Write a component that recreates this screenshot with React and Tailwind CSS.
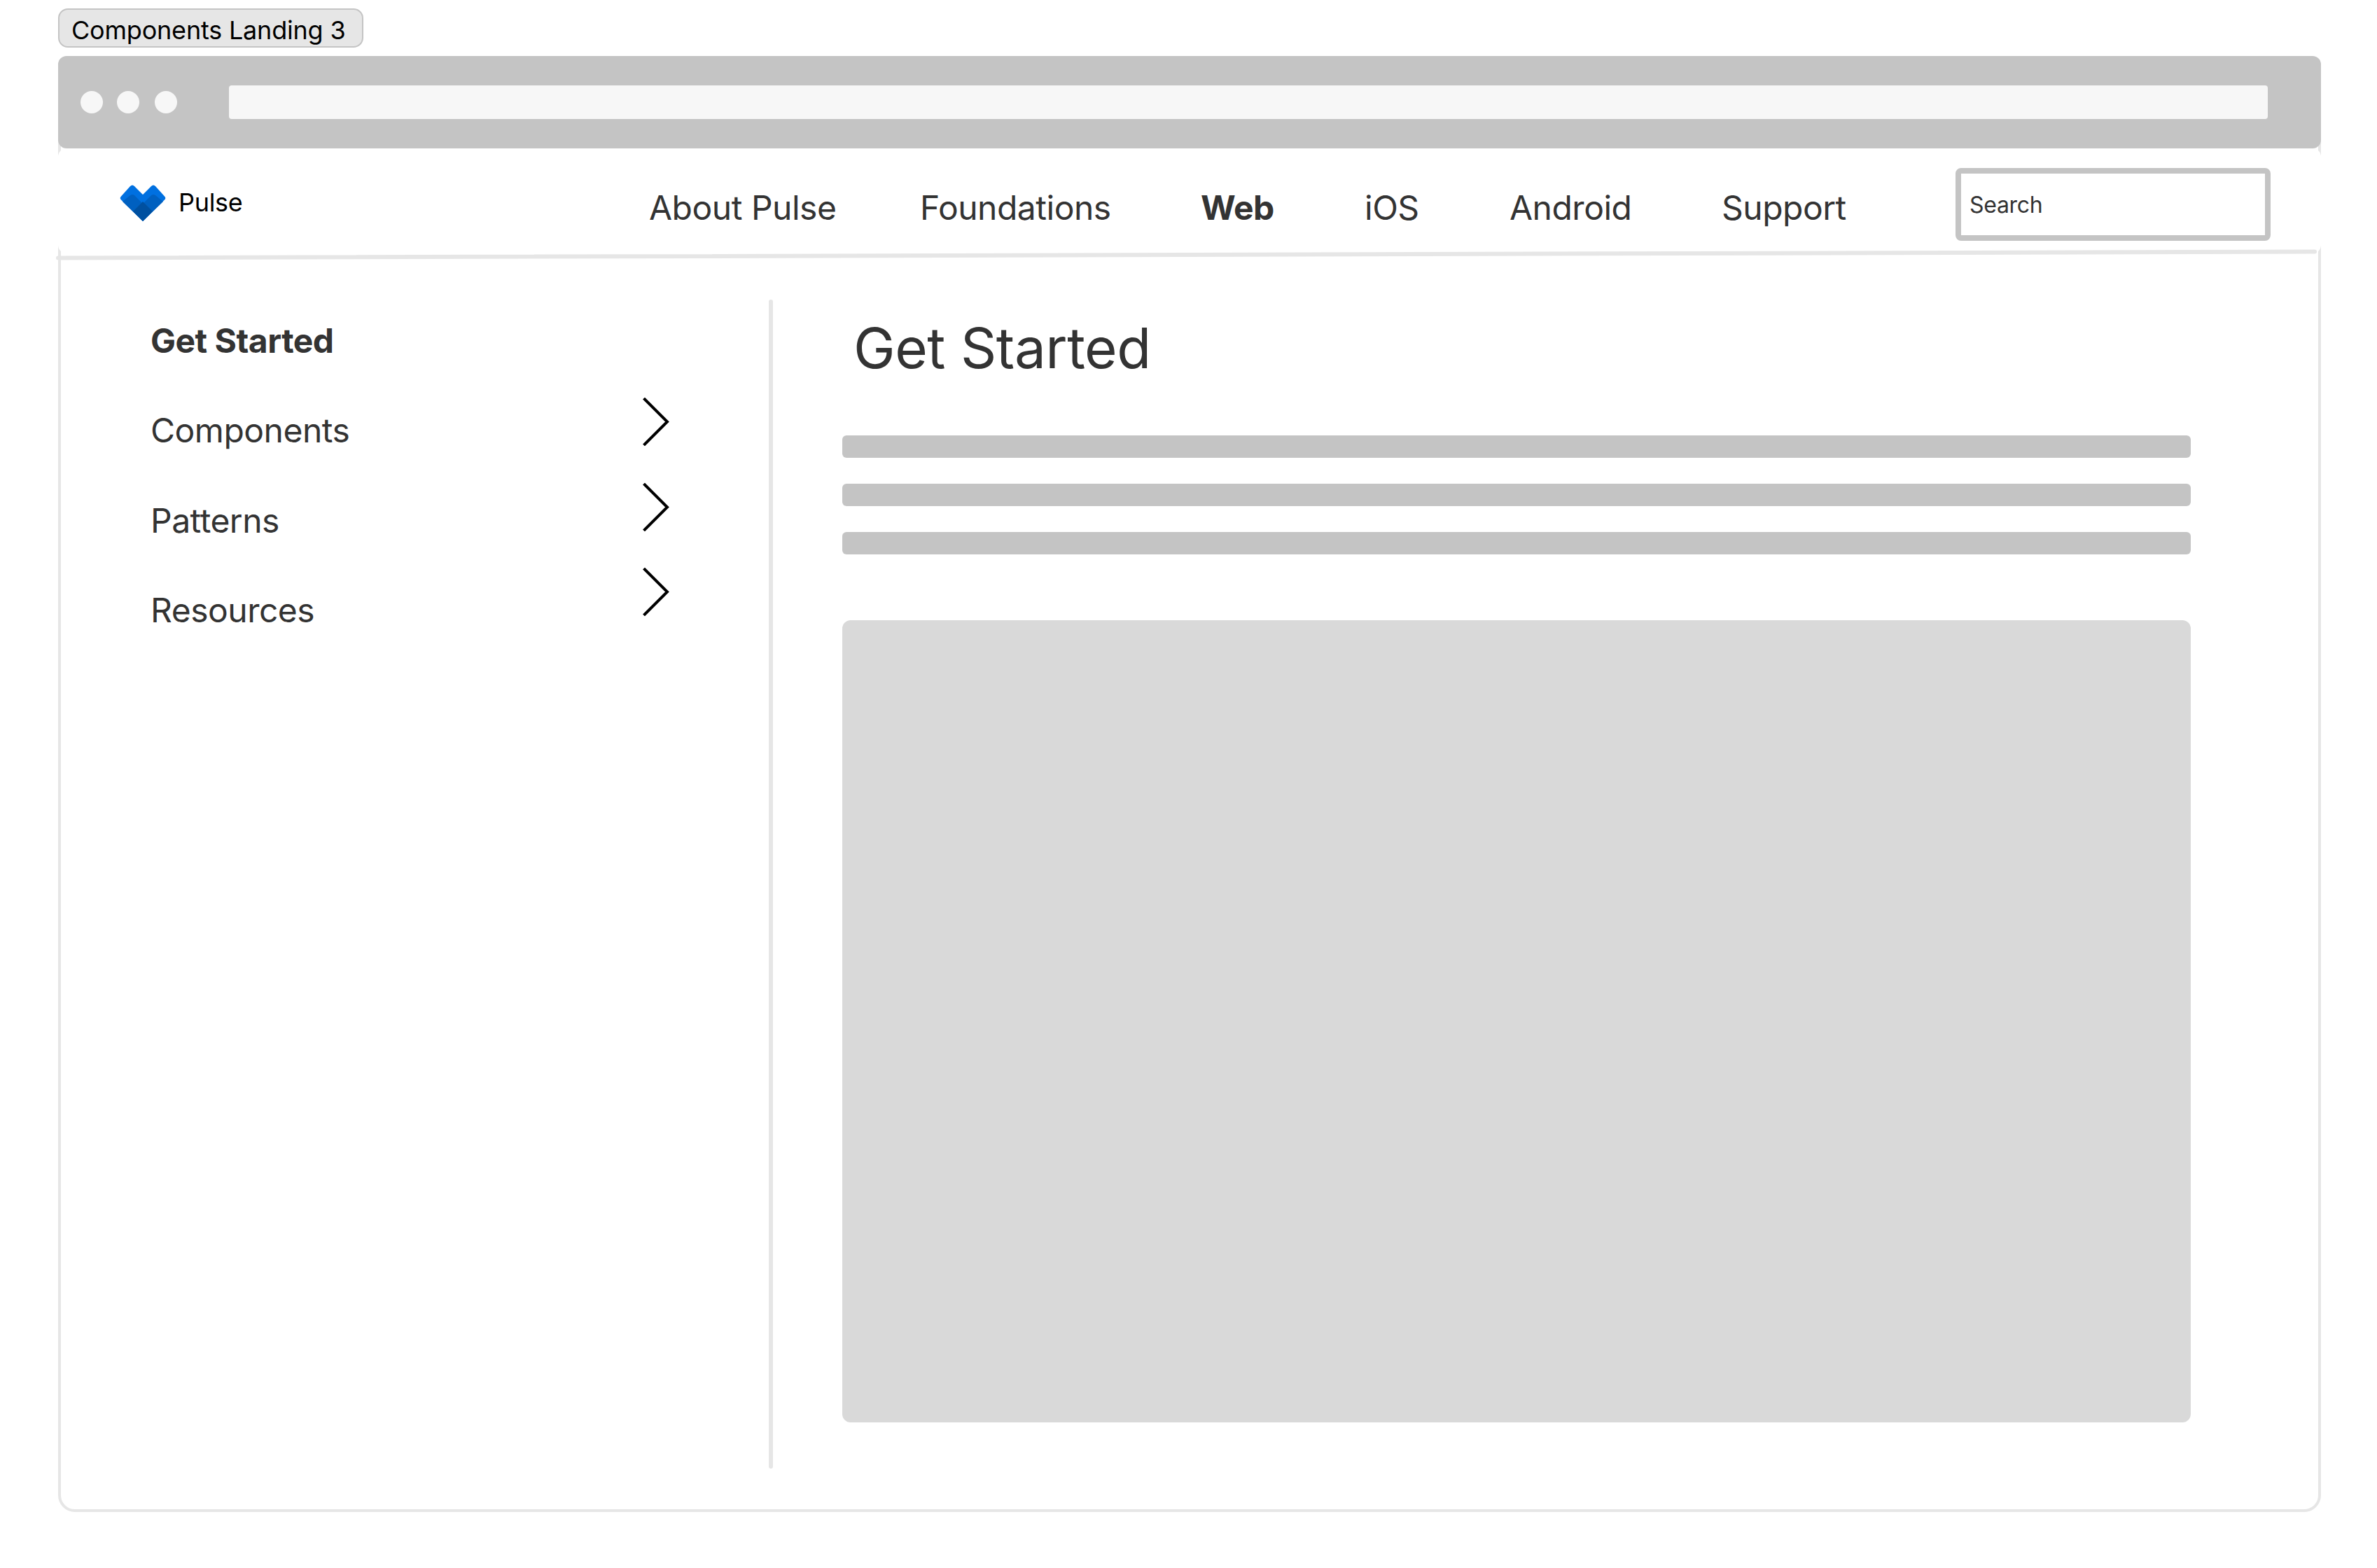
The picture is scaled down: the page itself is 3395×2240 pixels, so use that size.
const NAV = [
  { label: 'About Pulse', className: 'w-[387px]' },
  { label: 'Foundations', className: 'w-[401px]' },
  { label: 'Web', className: 'w-[234px] font-bold' },
  { label: 'iOS', className: 'w-[207px]' },
  { label: 'Android', className: 'w-[303px]' },
  { label: 'Support', className: 'w-[200px]' },
]

const SIDE = ['Components', 'Patterns', 'Resources']

function Logo() {
  return (
    <svg width="66" height="52" viewBox="0 0 66 52" className="shrink-0">
      <path d="M33 52 L1.5 21 Q0 19 1.5 17 L15 2 Q18 -1 21 2 L33 14 L45 2 Q48 -1 51 2 L64.5 17 Q66 19 64.5 21 Z" fill="#0070e0" />
      <path d="M33 52 L4 24 L15 15 Q18 13 21 15 L33 27 L45 15 Q48 13 51 15 L62 24 Z" fill="#0060c0" />
      <path d="M33 52 L19 38 L33 24 L47 38 Z" fill="#0050a0" />
    </svg>
  )
}

function Chevron() {
  return (
    <svg width="38" height="69" viewBox="0 0 38 69" className="block">
      <path d="M1.5 1 L35 34.5 L1.5 68" fill="none" stroke="#000" strokeWidth="4" />
    </svg>
  )
}

export default function App() {
  return (
    <div className="w-[3395px] h-[2240px] bg-white overflow-hidden pl-[83px] pt-[12px] font-['Inter',sans-serif]">
      <div className="w-[436px] h-[56px] flex items-center pl-[17px] pt-[5px] bg-[#e6e6e6] border-2 border-[#c4c4c4] rounded-[14px] text-[36px] tracking-[-0.2px] text-black whitespace-nowrap">
        Components Landing 3
      </div>

      <div className="mt-[12px] w-[3232px] h-[2080px] border-4 border-[#e6e6e6] rounded-[24px]">
        <div className="-m-[4px] h-[132px] flex items-center pl-[32px] bg-[#c4c4c4] rounded-[12px]">
          <div className="w-[32px] h-[32px] rounded-full bg-[#f7f7f7]" />
          <div className="ml-[20px] w-[32px] h-[32px] rounded-full bg-[#f7f7f7]" />
          <div className="ml-[22px] w-[32px] h-[32px] rounded-full bg-[#f7f7f7]" />
          <div className="ml-[74px] w-[2912px] h-[48px] rounded-[4px] bg-[#f7f7f7]" />
        </div>

        <div className="relative -mx-[4px] mt-[4px] h-[150px] flex items-center bg-white rounded-[12px]">
          <div className="ml-[88px] mt-[6px] w-[756px] shrink-0 flex items-center">
            <Logo />
            <span className="ml-[18px] -mt-[2px] text-[36px] tracking-[-0.3px] text-black">Pulse</span>
          </div>
          <nav className="flex items-center mt-[20px] text-[48px] tracking-[-0.5px] text-[#333]">
            {NAV.map((item) => (
              <span key={item.label} className={item.className}>{item.label}</span>
            ))}
          </nav>
          <div className="absolute left-[2710px] top-[28px] w-[450px] h-[104px] flex items-center pl-[12px] pt-[1px] border-[8px] border-[#c4c4c4] rounded-[8px] text-[32px] tracking-[-0.3px] text-[#333]">
            Search
          </div>
          <div className="absolute left-[-3px] top-[149px] w-[3229px] h-[6px] rounded-full bg-[#e6e6e6] rotate-[-0.16deg]" />
        </div>

        <div className="flex pt-[60px]">
          <div className="w-[1011px] shrink-0 pl-[128px] flex">
            <div className="w-[703px] shrink-0 pt-[1px] text-[48px] tracking-[-0.5px] leading-[128.3px] text-[#333]">
              <div className="font-bold">Get Started</div>
              {SIDE.map((s) => (
                <div key={s}>{s}</div>
              ))}
            </div>
            <div className="mt-[146px] flex flex-col gap-[52.5px]">
              <Chevron />
              <Chevron />
              <Chevron />
            </div>
          </div>
          <div className="mt-[6px] w-[6px] h-[1670px] rounded-full bg-[#e6e6e6]" />
          <div className="ml-[99px] mt-[6px] w-[1926px]">
            <h1 className="mt-[19px] pl-[16px] h-[100px] text-[80px] tracking-[-0.5px] leading-[100px] text-[#333]">Get Started</h1>
            <div className="mt-[75px] flex flex-col gap-[37px]">
              <div className="h-[32px] rounded-[6px] bg-[#c4c4c4]" />
              <div className="h-[32px] rounded-[6px] bg-[#c4c4c4]" />
              <div className="h-[32px] rounded-[6px] bg-[#c4c4c4]" />
            </div>
            <div className="mt-[94px] h-[1146px] rounded-[12px] bg-[#d9d9d9]" />
          </div>
        </div>
      </div>
    </div>
  )
}
